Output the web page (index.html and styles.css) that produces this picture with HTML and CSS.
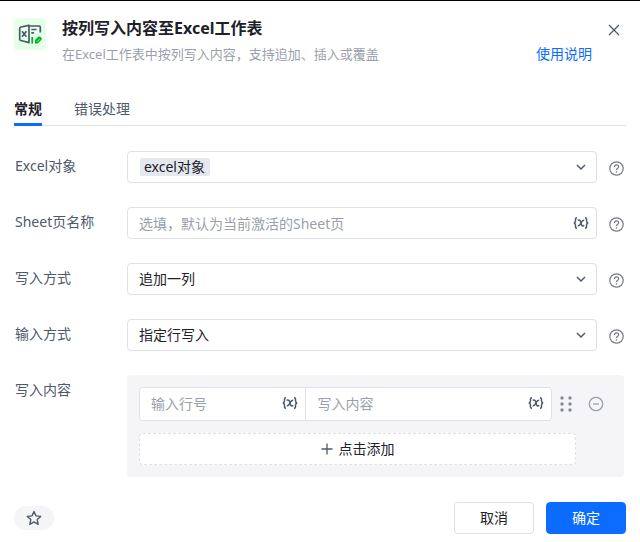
FILE: index.html
```html
<!DOCTYPE html>
<html lang="zh-CN">
<head>
<meta charset="utf-8">
<title>按列写入内容至Excel工作表</title>
<link rel="stylesheet" href="styles.css">
</head>
<body>
<svg class="sprite" aria-hidden="true">
  <symbol id="chevron" viewBox="0 0 12 12"><path d="M2 4l4 4 4-4" fill="none" stroke="currentColor" stroke-width="1.5"/></symbol>
  <symbol id="help" viewBox="0 0 15 15"><g fill="none" stroke="currentColor" stroke-width="1.2"><circle cx="7.5" cy="7.5" r="6.7"/><path d="M5.4 6.1C5.4 3 9.7 3.2 9.7 5.8C9.7 7.4 7.5 7.3 7.5 9.2"/></g><circle cx="7.5" cy="11" r=".8" fill="currentColor"/></symbol>
  <symbol id="variable" viewBox="0 0 16 12"><g fill="none" stroke="currentColor" stroke-width="1.5"><path d="M4 .8C2.3.8 2.500 1.600 2.500 3.500C2.500 5 2.200 5.800.8 6C2.200 6.200 2.500 7 2.500 8.500C2.500 10.400 2.300 11.200 4 11.200"/><path d="M12 .8C13.700.8 13.500 1.600 13.500 3.500C13.500 5 13.800 5.800 15.200 6C13.800 6.200 13.500 7 13.500 8.500C13.500 10.400 13.700 11.200 12 11.200"/><path d="M4.700 3.300C7.500 2.300 7.500 4.500 8 6C8.600 8 8.800 9.700 11.300 8.500M11.200 3.200C9 3 8.500 5 7.900 6.200C7.200 7.600 6.500 9.200 4.700 8.800"/></g></symbol>
</svg>
<main class="dialog">
  <header class="header">
    <svg class="logo" viewBox="0 0 32 32" aria-hidden="true">
      <rect width="32" height="32" rx="4" fill="#e6ffe8"/>
      <g fill="none" stroke="#4e5969" stroke-width="1.700" stroke-linejoin="round">
        <path d="M15 7.400L6.800 9Q5.700 9.300 5.700 10.400V21Q5.700 22.200 6.800 22.500L15 24.600Z"/>
        <path d="M15 8H25Q26.300 8 26.300 9.300V14.500M8 13.200L12.400 18.800M12.400 13.200L8 18.800"/>
        <path d="M17.300 11.500H22.500M17.300 14.800H20"/>
      </g>
      <path d="M18.200 19V25.600" stroke="#00b42a" stroke-width="1.700"/>
      <path d="M21 25.600V21.900L24.300 18.800Q25.300 18 26.300 18.800L27.500 20Q28.200 20.900 27.500 21.700L23.800 25.600Z" fill="#00b42a"/>
      <path d="M23.200 23.500L25.500 21.200" stroke="#e6ffe8" stroke-width=".8"/>
    </svg>
    <div class="heading">
      <h1>按列写入内容至Excel工作表</h1>
      <p>在Excel工作表中按列写入内容，支持追加、插入或覆盖</p>
    </div>
    <a class="doc-link" href="#">使用说明</a>
    <button class="icon-button close" type="button" aria-label="关闭">
      <svg width="16" height="16" viewBox="0 0 16 16"><path d="M3 3l10 10M13 3L3 13" stroke="currentColor" stroke-width="1.300"/></svg>
    </button>
  </header>

  <nav class="tabs">
    <a class="tab active" href="#">常规</a>
    <a class="tab" href="#">错误处理</a>
  </nav>

  <form class="form">
    <div class="row">
      <label for="target">Excel对象</label>
      <div class="field tagged">
        <select id="target"><option>excel对象</option></select>
        <svg class="chevron" aria-hidden="true"><use href="#chevron"/></svg>
      </div>
      <button class="icon-button help" type="button" aria-label="帮助"><svg><use href="#help"/></svg></button>
    </div>
    <div class="row">
      <label for="sheet">Sheet页名称</label>
      <div class="field">
        <input id="sheet" type="text" placeholder="选填，默认为当前激活的Sheet页">
        <button class="icon-button variable" type="button" aria-label="选择变量"><svg><use href="#variable"/></svg></button>
      </div>
      <button class="icon-button help" type="button" aria-label="帮助"><svg><use href="#help"/></svg></button>
    </div>
    <div class="row">
      <label for="write-mode">写入方式</label>
      <div class="field">
        <select id="write-mode"><option>追加一列</option></select>
        <svg class="chevron" aria-hidden="true"><use href="#chevron"/></svg>
      </div>
      <button class="icon-button help" type="button" aria-label="帮助"><svg><use href="#help"/></svg></button>
    </div>
    <div class="row">
      <label for="input-mode">输入方式</label>
      <div class="field">
        <select id="input-mode"><option>指定行写入</option></select>
        <svg class="chevron" aria-hidden="true"><use href="#chevron"/></svg>
      </div>
      <button class="icon-button help" type="button" aria-label="帮助"><svg><use href="#help"/></svg></button>
    </div>
    <div class="row content-row">
      <label for="row-number">写入内容</label>
      <div class="group">
        <div class="entry">
          <div class="pair">
            <div class="cell">
              <input id="row-number" type="text" placeholder="输入行号">
              <button class="icon-button variable" type="button" aria-label="选择变量"><svg><use href="#variable"/></svg></button>
            </div>
            <div class="cell wide">
              <input type="text" placeholder="写入内容" aria-label="写入内容">
              <button class="icon-button variable" type="button" aria-label="选择变量"><svg><use href="#variable"/></svg></button>
            </div>
          </div>
          <button class="icon-button drag" type="button" aria-label="拖动排序">
            <svg width="12" height="16" viewBox="0 0 12 16" fill="currentColor"><circle cx="2" cy="2" r="1.700"/><circle cx="10" cy="2" r="1.700"/><circle cx="2" cy="8" r="1.700"/><circle cx="10" cy="8" r="1.700"/><circle cx="2" cy="14" r="1.700"/><circle cx="10" cy="14" r="1.700"/></svg>
          </button>
          <button class="icon-button remove" type="button" aria-label="删除">
            <svg width="16" height="16" viewBox="0 0 16 16" fill="none" stroke="currentColor" stroke-width="1.300"><circle cx="8" cy="8" r="6.700"/><path d="M5 8h6"/></svg>
          </button>
        </div>
        <button class="add" type="button">
          <svg width="12" height="12" viewBox="0 0 12 12" aria-hidden="true"><path d="M6 .5v11M.5 6h11" stroke="#4e5969" stroke-width="1.300"/></svg>
          点击添加
        </button>
      </div>
    </div>
  </form>

  <footer class="footer">
    <button class="favorite" type="button" aria-label="收藏">
      <svg width="16" height="16" viewBox="0 0 16 16"><path d="M8 1.500L10 5.900L14.700 6.400L11.200 9.600L12.200 14.300L8 11.900L3.800 14.300L4.800 9.600L1.300 6.400L6 5.900Z" fill="none" stroke="currentColor" stroke-width="1.400" stroke-linejoin="round"/></svg>
    </button>
    <button class="button" type="button">取消</button>
    <button class="button primary" type="button">确定</button>
  </footer>
</main>
</body>
</html>
```
FILE: styles.css
```css
* {
  box-sizing: border-box;
}

body {
  margin: 0;
  background: #fff;
  color: #1d2129;
  font: 14px/20px "Noto Sans", "Noto Sans CJK SC", sans-serif;
}

button,
input,
select {
  font: inherit;
  color: inherit;
}

a {
  text-decoration: none;
}

.sprite {
  display: none;
}

svg {
  display: block;
  flex: none;
}

.dialog {
  display: flex;
  flex-direction: column;
  min-height: 100vh;
  padding: 0 14px 8px;
  border-top: 1px solid #000;
}

.header {
  display: flex;
  gap: 14px;
  padding: 17px 4px 0 0;
}

.logo {
  width: 32px;
  height: 32px;
}

.heading {
  flex: 1;
  padding-left: 2px;
}

h1 {
  margin: 0;
  font-size: 16px;
  line-height: 20px;
}

p {
  margin: 6px 0 0;
  color: #9a9fab;
  font-size: 13px;
}

.doc-link {
  align-self: flex-end;
  color: #0b6cff;
}

.icon-button {
  display: flex;
  flex: none;
  align-items: center;
  padding: 0;
  border: 0;
  background: none;
  color: #4e5969;
}

.close {
  align-self: flex-start;
  padding-top: 4px;
}

.tabs {
  display: flex;
  gap: 32px;
  margin-top: 35px;
  border-bottom: 1px solid #e0e1e5;
}

.tab {
  margin-bottom: -1px;
  padding-bottom: 4px;
  border-bottom: 3px solid transparent;
  color: #4e5969;
}

.tab.active {
  border-color: #0b6cff;
  color: #1d2129;
  font-weight: 700;
}

.form {
  display: flex;
  flex-direction: column;
  gap: 24px;
  padding: 25px 2px 0 0;
}

.row {
  display: grid;
  grid-template-columns: 112px 1fr 27px;
  align-items: start;
  padding-left: 1px;
}

.content-row {
  grid-template-columns: 112px 1fr;
}

.row label {
  padding-top: 5px;
  color: #4e5969;
}

.field,
.cell {
  position: relative;
  display: flex;
  align-items: center;
}

.field {
  height: 32px;
  padding-right: 7px;
  border: 1px solid #dfe1e8;
  border-radius: 4px;
}

.field select,
.field input,
.cell input {
  flex: 1;
  min-width: 0;
  width: 100%;
  height: 100%;
  padding: 0 0 0 11px;
  border: 0;
  outline: 0;
  background: none;
  appearance: none;
}

.field select {
  position: relative;
}

.tagged::before {
  content: "";
  position: absolute;
  left: 12px;
  width: 70px;
  height: 18px;
  border-radius: 2px;
  background: #e5e8ef;
}

.tagged select {
  padding-left: 16px;
}

input::placeholder {
  color: #9a9fab;
  opacity: 1;
}

.chevron {
  position: absolute;
  right: 9px;
  width: 12px;
  height: 12px;
  color: #4e5969;
  pointer-events: none;
}

.variable svg {
  width: 16px;
  height: 12px;
}

.help {
  justify-self: end;
  padding-top: 10px;
  color: #777b84;
}

.help svg {
  width: 15px;
  height: 15px;
}

.group {
  padding: 12px;
  border-radius: 4px;
  background: #f5f5f8;
}

.entry {
  display: flex;
  align-items: center;
}

.pair {
  display: flex;
  flex: 1;
  height: 34px;
  border: 1px solid #dfe1e8;
  border-radius: 4px;
  background: #fff;
}

.cell {
  flex: 2;
  padding: 0 7px 2px 0;
}

.cell.wide {
  flex: 3;
  border-left: 1px solid #dfe1e8;
}

.drag {
  margin-left: 8px;
  color: #868b96;
}

.remove {
  margin: 0 8px 0 16px;
  color: #9a9fab;
}

.add {
  display: flex;
  align-items: center;
  justify-content: center;
  gap: 6px;
  width: calc(100% - 36px);
  height: 32px;
  margin-top: 12px;
  border: 1px dashed #dfe1e8;
  border-radius: 4px;
  background: #fff;
}

.footer {
  display: flex;
  align-items: center;
  gap: 12px;
  margin-top: auto;
}

.favorite {
  display: flex;
  align-items: center;
  justify-content: center;
  width: 40px;
  height: 24px;
  margin-right: auto;
  padding: 0;
  border: 0;
  border-radius: 12px;
  background: #f5f5f8;
  color: #4e5969;
}

.button {
  width: 80px;
  height: 32px;
  border: 1px solid #dfe1e8;
  border-radius: 4px;
  background: #fff;
}

.button.primary {
  border-color: #0b6cff;
  background: #0b6cff;
  color: #fff;
}
```
